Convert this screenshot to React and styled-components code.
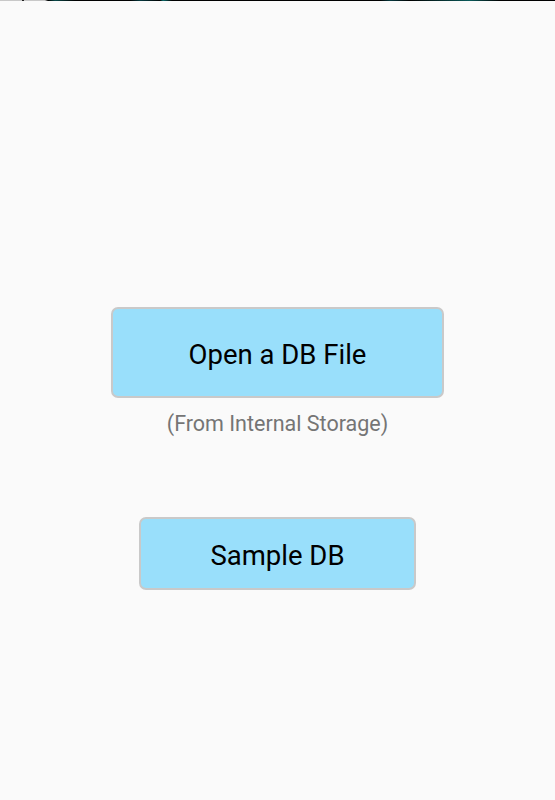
import React from "react";
import styled, { createGlobalStyle } from "styled-components";

const GlobalStyle = createGlobalStyle`
  html, body {
    margin: 0;
    padding: 0;
    background: #fafafa;
  }
  body {
    font-family: Roboto, "Noto Sans", "Liberation Sans", sans-serif;
  }
`;

const Screen = styled.div`
  width: 555px;
  height: 800px;
  display: flex;
  flex-direction: column;
  align-items: center;
  background: #fafafa;
  overflow: hidden;
`;

// the cut-off edge of the status bar above
const StatusEdge = styled.div`
  align-self: stretch;
  height: 1px;
  background: linear-gradient(
    90deg,
    #c8c8c8 0px,
    #c8c8c8 22px,
    #222 22px,
    #222 24px,
    #c8c8c8 24px,
    #c8c8c8 45px,
    #000 48px,
    #0a4a4a 55px,
    #000 75px,
    #000 130px,
    #063a40 140px,
    #000 160px,
    #0a6a6a 163px,
    #000 172px,
    #000 380px,
    #063a40 390px,
    #000 410px,
    #0a5a5a 470px,
    #000 500px
  );
`;

const Content = styled.div`
  display: flex;
  flex-direction: column;
  align-items: center;
  padding-top: 306px;
`;

const ActionButton = styled.button`
  box-sizing: border-box;
  width: ${(p) => p.$w}px;
  height: ${(p) => p.$h}px;
  background: #99dffb;
  border: 2px solid #c9c9c9;
  border-radius: 7px;
  color: #000;
  font-family: Roboto, "Noto Sans", "Liberation Sans", sans-serif;
  font-size: 27.5px;
  cursor: pointer;
  padding: 3px 0 0;
`;

const Caption = styled.div`
  margin-top: 13px;
  color: #757575;
  font-size: 21.5px;
  line-height: 26px;
`;

const SecondGroup = styled.div`
  margin-top: 80px;
`;

export default function App() {
  return (
    <>
      <GlobalStyle />
      <Screen>
        <StatusEdge />
        <Content>
          <ActionButton $w={333} $h={91}>
            Open a DB File
          </ActionButton>
          <Caption>(From Internal Storage)</Caption>
          <SecondGroup>
            <ActionButton $w={277} $h={73}>
              Sample DB
            </ActionButton>
          </SecondGroup>
        </Content>
      </Screen>
    </>
  );
}
